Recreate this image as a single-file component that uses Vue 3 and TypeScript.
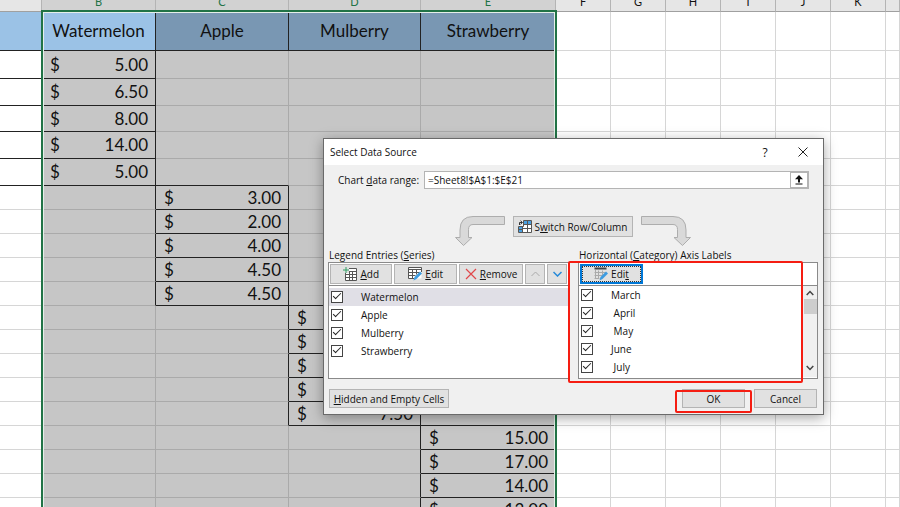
<script setup lang="ts">
import { ref } from 'vue'

interface Cell {
  amount: string
}

const columns = ['', 'B', 'C', 'D', 'E', 'F', 'G', 'H', 'I', 'J', 'K', '']
const fruits = ['Watermelon', 'Apple', 'Mulberry', 'Strawberry']

// Each column's amounts start where the previous column's amounts stop.
const amounts: string[][] = [
  ['5.00', '6.50', '8.00', '14.00', '5.00'],
  ['3.00', '2.00', '4.00', '4.50', '4.50'],
  ['', '', '', '', '7.50'],
  ['15.00', '17.00', '14.00', '13.00'],
]

const rowCount = 19

function isSelected(col: number): boolean {
  return col >= 1 && col <= 4
}

function cellAt(row: number, col: number): Cell | null {
  const column = amounts[col - 1]
  if (!column) return null
  const index = row - (col - 1) * 5
  return index >= 0 && index < column.length ? { amount: column[index] } : null
}

function cellClass(row: number, col: number): Record<string, boolean> {
  const own = cellAt(row, col) !== null
  return {
    selected: isSelected(col),
    'line-bottom': own || cellAt(row + 1, col) !== null || (col === 0 && row < 5),
    'line-right': own || cellAt(row, col + 1) !== null,
  }
}

const range = ref('=Sheet8!$A$1:$E$21')
const series = ref(fruits.map((name) => ({ name, checked: true })))
const activeSeries = ref(0)
const categories = ref(
  ['March', '\u00a0April', '\u00a0May', 'June', '\u00a0July'].map((name) => ({ name, checked: true })),
)
</script>

<template>
  <main class="workbook">
    <div class="sheet">
      <table>
        <colgroup>
          <col class="col-a" />
          <col class="col-b" />
          <col class="col-c" />
          <col class="col-d" />
          <col class="col-e" />
          <col v-for="n in 6" :key="n" class="col-plain" />
          <col />
        </colgroup>
        <thead>
          <tr class="letters">
            <th v-for="(c, i) in columns" :key="i" :class="{ picked: isSelected(i) }">{{ c }}</th>
          </tr>
        </thead>
        <tbody>
          <tr class="titles">
            <td class="title active"></td>
            <td v-for="(f, i) in fruits" :key="f" class="title" :class="{ active: i === 0 }">{{ f }}</td>
            <td v-for="n in 7" :key="n"></td>
          </tr>
          <tr v-for="r in rowCount" :key="r" :class="r <= 5 ? 'tall' : 'short'">
            <td v-for="(c, i) in columns" :key="i" :class="cellClass(r - 1, i)">
              <div v-if="cellAt(r - 1, i)" class="money">
                <span>$</span><span>{{ cellAt(r - 1, i)?.amount }}</span>
              </div>
            </td>
          </tr>
        </tbody>
      </table>
      <div class="selection"></div>
    </div>

    <section class="dialog" role="dialog" aria-labelledby="dialog-title">
      <header class="titlebar">
        <h1 id="dialog-title">Select Data Source</h1>
        <button class="plain" type="button">?</button>
        <button class="plain" type="button">
          <svg width="10" height="10" viewBox="0 0 10 10"><path d="M.5.5l9 9M9.500.5l-9 9" stroke="#222" fill="none" /></svg>
        </button>
      </header>

      <div class="range">
        <label for="range">Chart <u>d</u>ata range:</label>
        <div class="range-box">
          <input id="range" v-model="range" type="text" />
          <button type="button">
            <svg width="10" height="10" viewBox="0 0 10 10"><path d="M5 0l4 4.200H6V7.500H4V4.200H1zM1.500 8.500h7v1h-7z" fill="#111" /></svg>
          </button>
        </div>
      </div>

      <div class="switch">
        <svg width="50" height="30" viewBox="0 0 50 30">
          <path d="M49.500.5v8H18q-4.500 0-4.500 5V21.500H17L8.500 29.500.5 21.500H5V14Q5 .5 18 .5z" fill="#d9d9d9" stroke="#adadad" />
        </svg>
        <button class="push" type="button">
          <svg width="14" height="13" viewBox="0 0 14 13">
            <path d="M4.500.5h9v12h-13v-7h4z" fill="#fff" />
            <path d="M6 1h7v3H6zM1 7h3v5H1z" fill="#4ba0e0" />
            <path d="M5.500.5h8v12h-13v-6h5zM5.500 4.500h8M4.500 8.500h9M9.500.5v12M4.500 6.500v6M.5 9.500h4" stroke="#555" fill="none" />
            <path d="M1.500 5V2.500h2.500M2.500.7L4.500 2.500 2.500 4.300" stroke="#333" fill="none" />
          </svg>
          <span>S<u>w</u>itch Row/Column</span>
        </button>
        <svg width="50" height="30" viewBox="0 0 50 30">
          <path d="M.5.5v8H32q4.500 0 4.500 5V21.500H33L41.500 29.500 49.500 21.500H45V14Q45 .5 32 .5z" fill="#d9d9d9" stroke="#adadad" />
        </svg>
      </div>

      <div class="panes">
        <section class="pane">
          <h2>Legend Entries (<u>S</u>eries)</h2>
          <div class="box">
            <div class="toolbar">
              <button class="push add" type="button">
                <svg width="14" height="14" viewBox="0 0 14 14">
                  <path d="M2.500 6h11v7.500h-11zM6 1.500h7.500V6H6z" fill="#fff" />
                  <path d="M2.500 6V13.500h11V1.500H6M6 4.500h7.500M2.500 7.500h11M2.500 10.500h11M6.500 4v9.500M9.500 4.500v9" stroke="#555" fill="none" />
                  <path d="M3 0v6M0 3h6" stroke="#2f9e62" fill="none" />
                </svg>
                <span><u>A</u>dd</span>
              </button>
              <button class="push edit" type="button">
                <svg width="14" height="14" viewBox="0 0 14 14">
                  <path d="M.5.5h13v11H.5z" fill="#fff" />
                  <path d="M6 11.500H.5V.5h13V5M.5 2.500h13M.5 5.500h11M.5 8.500h7M4.500 2.500v9M8.500 2.500v5" stroke="#555" fill="none" />
                  <path d="M5.500 13.500l1-3.500 5.500-5.500 2 2-5.500 5.500z" fill="#3d9be0" />
                </svg>
                <span><u>E</u>dit</span>
              </button>
              <button class="push remove" type="button">
                <svg width="12" height="12" viewBox="0 0 12 12"><path d="M1 1l10 10M11 1L1 11" stroke="#e0484b" stroke-width="1.200" fill="none" /></svg>
                <span><u>R</u>emove</span>
              </button>
              <button class="push move" type="button" disabled>
                <svg width="9" height="6" viewBox="0 0 9 6"><path d="M.5 5l4-4 4 4" stroke="#aaa" fill="none" /></svg>
              </button>
              <button class="push move" type="button">
                <svg width="9" height="6" viewBox="0 0 9 6"><path d="M.5 1l4 4 4-4" stroke="#2589d8" stroke-width="1.500" fill="none" /></svg>
              </button>
            </div>
            <ul class="entries series">
              <li v-for="(s, i) in series" :key="s.name" :class="{ current: i === activeSeries }">
                <label><input v-model="s.checked" type="checkbox" /><span>{{ s.name }}</span></label>
              </li>
            </ul>
          </div>
        </section>

        <section class="pane">
          <h2>Horizontal (<u>C</u>ategory) Axis Labels</h2>
          <div class="box">
            <div class="toolbar">
              <button class="push edit focused" type="button">
                <svg width="14" height="14" viewBox="0 0 14 14">
                  <path d="M.5 1.500h12" stroke="#444" stroke-width="2" />
                  <path d="M1.500 11.500V3M.5 5.500h11M.5 8.500h8M4.500 3.500v8M8.500 3.500v5M.5 11.500h5" stroke="#aaa" fill="none" />
                  <path d="M5.500 13.500l1-3.500 5.500-5.500 2 2-5.500 5.500z" fill="#3d9be0" />
                </svg>
                <span>Edi<u>t</u></span>
              </button>
            </div>
            <div class="scroller">
              <ul class="entries">
                <li v-for="c in categories" :key="c.name">
                  <label><input v-model="c.checked" type="checkbox" /><span>{{ c.name }}</span></label>
                </li>
              </ul>
              <div class="scrollbar">
                <svg width="8" height="6" viewBox="0 0 8 6"><path d="M.7 5L4 1.500 7.300 5" stroke="#444" stroke-width="1.500" fill="none" /></svg>
                <div class="thumb"></div>
                <svg width="8" height="6" viewBox="0 0 8 6"><path d="M.7 1L4 4.500 7.300 1" stroke="#444" stroke-width="1.500" fill="none" /></svg>
              </div>
            </div>
          </div>
        </section>
      </div>

      <footer class="actions">
        <button class="push hidden-cells" type="button"><span><u>H</u>idden and Empty Cells</span></button>
        <button class="push" type="button">OK</button>
        <button class="push" type="button">Cancel</button>
      </footer>

      <div class="mark mark-labels"></div>
      <div class="mark mark-ok"></div>
    </section>
  </main>
</template>

<style>
body {
  background: #fff;
}
</style>

<style scoped>
.workbook {
  position: relative;
  height: 100vh;
  overflow: hidden;
  color: #111;
  font-family: 'Open Sans', 'Noto Sans', sans-serif;
  font-size: 10px;
}

/* The top of the letter row is scrolled out of view. */
.sheet {
  position: relative;
  margin-top: -8px;
  font-family: Lato, sans-serif;
}

table {
  width: 100%;
  table-layout: fixed;
  border-collapse: separate;
  border-spacing: 0;
}

.col-a { width: 42px; }
.col-b { width: 114px; }
.col-c { width: 133px; }
.col-d { width: 132px; }
.col-e { width: 135px; }
.col-plain { width: 55px; }

th,
td {
  box-sizing: border-box;
  padding: 0;
  border-right: 1px solid #d6d6d6;
  border-bottom: 1px solid #d6d6d6;
}

.letters th {
  height: 20px;
  background: #e6e6e6;
  border-right-color: #b4b4b4;
  border-bottom-color: #a0a0a0;
  font-size: 11px;
  font-weight: 400;
  line-height: 19px;
}

.letters .picked {
  background: #d2d2d2;
  color: #217346;
}

.titles td { height: 39px; }
.tall td { height: 27px; }
.tall:nth-child(2) td { height: 28px; }
.tall:nth-child(4) td { height: 26px; }
.short td { height: 24px; }

.titles .title {
  padding-bottom: 1px;
  background: #7997b3;
  border-color: #222;
  font-size: 17px;
  line-height: 24px;
  text-align: center;
}

.titles .active { background: #9bc2e6; }

.selected {
  background: #c6c6c6;
  border-color: #aaa;
}

.line-bottom { border-bottom-color: #222; }
.line-right { border-right-color: #222; }

.money {
  display: flex;
  justify-content: space-between;
  padding: 0 7px 0 8px;
  font-size: 17px;
  line-height: 22px;
}

.selection {
  position: absolute;
  top: 18px;
  bottom: 0;
  left: 41px;
  box-sizing: border-box;
  width: 516px;
  border: 2px solid #217346;
  border-bottom: 0;
  box-shadow: inset 0 0 0 1px #e6efe9;
}

.dialog {
  position: absolute;
  top: 138px;
  left: 323px;
  width: 501px;
  box-sizing: border-box;
  padding-bottom: 6px;
  background: #f0f0f0;
  border: 1px solid #6a6a6a;
  box-shadow: 0 3px 12px rgba(0, 0, 0, 0.35);
}

.dialog svg { flex: none; }

button,
input {
  margin: 0;
  color: inherit;
  font: inherit;
}

h1,
h2 {
  margin: 0;
  font-size: inherit;
  font-weight: 400;
}

u { text-underline-offset: 1px; }

.titlebar {
  display: flex;
  align-items: center;
  height: 26px;
  padding: 0 1px 0 6px;
  background: #fff;
}

.titlebar h1 { flex: 1; }

.plain {
  display: flex;
  align-items: center;
  justify-content: center;
  width: 38px;
  height: 24px;
  padding: 0;
  background: none;
  border: 0;
  font-size: 12px;
}

.range {
  display: flex;
  align-items: center;
  gap: 8px;
  padding: 6px 14px 0 14px;
}

.range label {
  width: 78px;
  white-space: nowrap;
}

.range-box {
  display: flex;
  flex: 1;
  box-sizing: border-box;
  height: 18px;
  background: #fff;
  border: 1px solid #b4b4b4;
}

.range-box input {
  flex: 1;
  min-width: 0;
  padding: 0 3px;
  background: none;
  border: 0;
  outline: 0;
}

.range-box button {
  display: flex;
  align-items: center;
  justify-content: center;
  width: 18px;
  padding: 0;
  background: #fff;
  border: 1px solid #b4b4b4;
}

.switch {
  display: flex;
  align-items: flex-start;
  justify-content: center;
  gap: 8px;
  padding: 27px 2px 0 0;
}

.push {
  display: flex;
  align-items: center;
  justify-content: center;
  gap: 3px;
  box-sizing: border-box;
  height: 20px;
  padding: 0 4px;
  background: #e1e1e1;
  border: 1px solid #b4b4b4;
  white-space: nowrap;
}

.switch .push {
  width: 120px;
  height: 21px;
}

.panes {
  display: grid;
  grid-template-columns: 241px 1fr;
  gap: 9px;
  padding: 2px 5px 0 4px;
}

.pane h2 {
  padding-left: 1px;
  line-height: 14px;
}

.box {
  box-sizing: border-box;
  height: 117px;
  background: #fff;
  border: 1px solid #8a8a8a;
}

.toolbar {
  display: flex;
  gap: 2px;
  padding: 1px;
  border-bottom: 1px solid #8a8a8a;
}

.add, .edit { width: 63px; }
.remove { width: 65px; }
.move { width: 20px; padding: 0; }

.focused {
  border: 2px solid #0078d7;
  outline: 1px dotted #333;
  outline-offset: -3px;
}

.entries {
  flex: 1;
  margin: 0;
  padding: 0;
  list-style: none;
}

.series { padding-top: 2px; }
.current { background: #e0dfe6; }

.entries label {
  display: flex;
  align-items: center;
  gap: 18px;
  height: 18px;
  padding-left: 2px;
}

.entries input {
  position: relative;
  box-sizing: border-box;
  width: 12px;
  height: 12px;
  appearance: none;
  background: #fff;
  border: 1px solid #444;
}

.entries input:checked::after {
  position: absolute;
  top: 1px;
  left: 1px;
  width: 7px;
  height: 3px;
  border: solid #222;
  border-width: 0 0 1px 1px;
  content: '';
  transform: rotate(-45deg);
}

.scroller { display: flex; }

.scrollbar {
  display: flex;
  flex-direction: column;
  align-items: center;
  box-sizing: border-box;
  width: 14px;
  height: 91px;
  padding: 4px 0 6px;
  background: #f0f0f0;
}

.thumb {
  width: 13px;
  height: 15px;
  margin: 3px 0 auto;
  background: #cdcdcd;
}

.actions {
  display: flex;
  gap: 9px;
  padding: 10px 6px 0 5px;
}

.actions .push {
  width: 63px;
  height: 19px;
}

.actions .hidden-cells {
  width: 120px;
  margin-right: auto;
}

.mark {
  position: absolute;
  box-sizing: border-box;
  border: 2px solid #f51d12;
  border-radius: 2px;
  pointer-events: none;
}

.mark-labels {
  top: 122px;
  left: 244px;
  width: 235px;
  height: 122px;
}

.mark-ok {
  top: 251px;
  left: 351px;
  width: 77px;
  height: 23px;
}
</style>
